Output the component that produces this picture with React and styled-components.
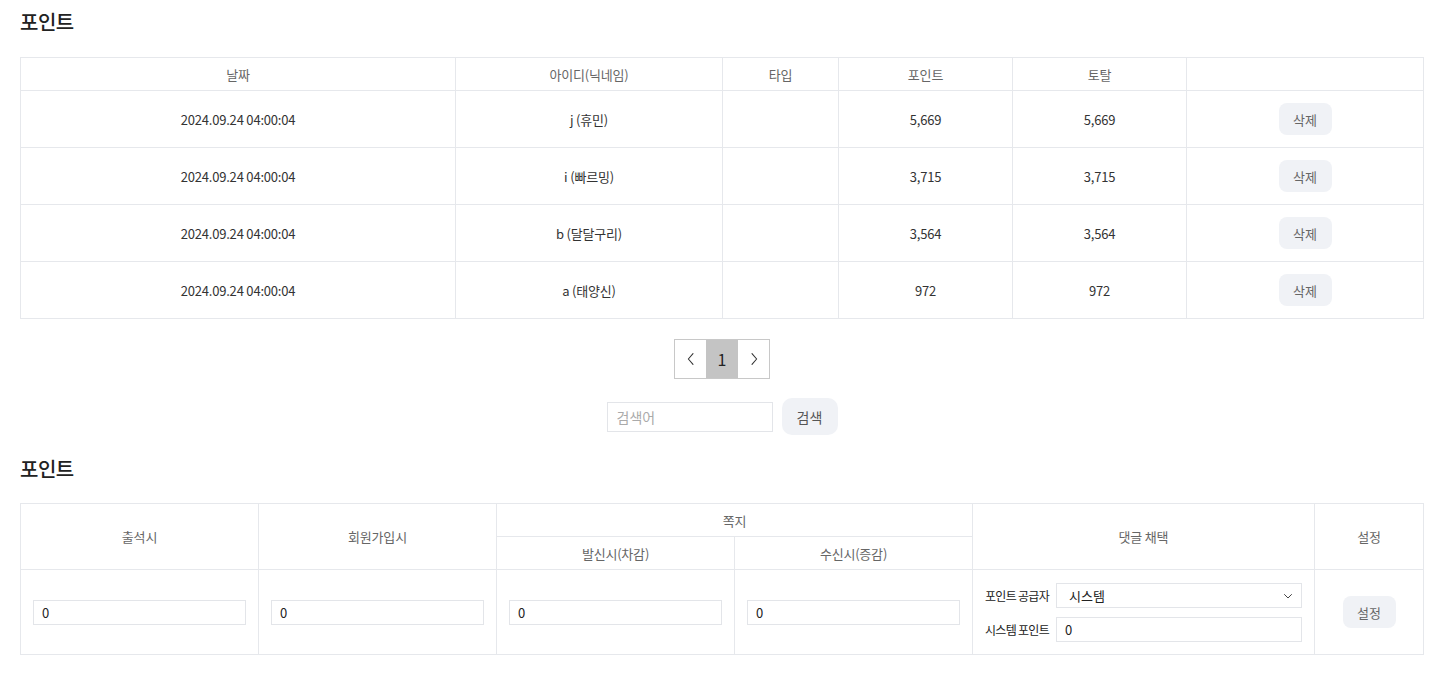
import React, { useState } from 'react'
import styled, { createGlobalStyle } from 'styled-components'

const GlobalStyle = createGlobalStyle`
  * { box-sizing: border-box; }
  body {
    margin: 0;
    background: #fff;
    font-family: "Noto Sans CJK KR", "Noto Sans", sans-serif;
    color: #333;
  }
`

const rows = [
  { date: '2024.09.24 04:00:04', id: 'j (휴민)', type: '', point: '5,669', total: '5,669' },
  { date: '2024.09.24 04:00:04', id: 'i (빠르밍)', type: '', point: '3,715', total: '3,715' },
  { date: '2024.09.24 04:00:04', id: 'b (달달구리)', type: '', point: '3,564', total: '3,564' },
  { date: '2024.09.24 04:00:04', id: 'a (태양신)', type: '', point: '972', total: '972' },
]

const App = () => {
  const [keyword, setKeyword] = useState('')
  const [settings, setSettings] = useState({
    attend: '0',
    join: '0',
    send: '0',
    receive: '0',
    system: '0',
  })

  const onChange = (e) => {
    setSettings({ ...settings, [e.target.name]: e.target.value })
  }

  return (
    <>
      <GlobalStyle />
      <Page>
        <Title>포인트</Title>
        <Table>
          <colgroup>
            <col style={{ width: 435 }} />
            <col style={{ width: 267 }} />
            <col style={{ width: 116 }} />
            <col style={{ width: 174 }} />
            <col style={{ width: 174 }} />
            <col />
          </colgroup>
          <thead>
            <tr>
              <Th $h={33}>날짜</Th>
              <Th $h={33}>아이디(닉네임)</Th>
              <Th $h={33}>타입</Th>
              <Th $h={33}>포인트</Th>
              <Th $h={33}>토탈</Th>
              <Th $h={33}></Th>
            </tr>
          </thead>
          <tbody>
            {rows.map((r, i) => (
              <tr key={i}>
                <Td $h={57}>{r.date}</Td>
                <Td $h={57}>{r.id}</Td>
                <Td $h={57}>{r.type}</Td>
                <Td $h={57}>{r.point}</Td>
                <Td $h={57}>{r.total}</Td>
                <Td $h={57}>
                  <GrayButton>삭제</GrayButton>
                </Td>
              </tr>
            ))}
          </tbody>
        </Table>

        <Pagination>
          <PageBtn aria-label="prev">
            <svg width="16" height="16" viewBox="0 0 24 24" fill="none" stroke="#333" strokeWidth="1.6" strokeLinecap="round" strokeLinejoin="round">
              <polyline points="15 4 8 12 15 20" />
            </svg>
          </PageBtn>
          <PageBtn $active>1</PageBtn>
          <PageBtn aria-label="next">
            <svg width="16" height="16" viewBox="0 0 24 24" fill="none" stroke="#333" strokeWidth="1.6" strokeLinecap="round" strokeLinejoin="round">
              <polyline points="9 4 16 12 9 20" />
            </svg>
          </PageBtn>
        </Pagination>

        <SearchRow>
          <SearchInput
            placeholder="검색어"
            value={keyword}
            onChange={(e) => setKeyword(e.target.value)}
          />
          <SearchButton>검색</SearchButton>
        </SearchRow>

        <Title $second>포인트</Title>
        <Table>
          <colgroup>
            <col style={{ width: 238 }} />
            <col style={{ width: 238 }} />
            <col style={{ width: 238 }} />
            <col style={{ width: 238 }} />
            <col style={{ width: 342 }} />
            <col />
          </colgroup>
          <thead>
            <tr>
              <Th rowSpan={2}>출석시</Th>
              <Th rowSpan={2}>회원가입시</Th>
              <Th colSpan={2} $h={33}>쪽지</Th>
              <Th rowSpan={2}>댓글 채택</Th>
              <Th rowSpan={2}>설정</Th>
            </tr>
            <tr>
              <Th $h={33}>발신시(차감)</Th>
              <Th $h={33}>수신시(증감)</Th>
            </tr>
          </thead>
          <tbody>
            <tr>
              <InputCell $h={85}>
                <Field name="attend" value={settings.attend} onChange={onChange} />
              </InputCell>
              <InputCell $h={85}>
                <Field name="join" value={settings.join} onChange={onChange} />
              </InputCell>
              <InputCell $h={85}>
                <Field name="send" value={settings.send} onChange={onChange} />
              </InputCell>
              <InputCell $h={85}>
                <Field name="receive" value={settings.receive} onChange={onChange} />
              </InputCell>
              <InputCell $h={85}>
                <FormGrid>
                  <Label>포인트 공급자</Label>
                  <SelectBox>
                    <Select defaultValue="system">
                      <option value="system">시스템</option>
                    </Select>
                    <svg width="12" height="12" viewBox="0 0 24 24" fill="none" stroke="#444" strokeWidth="2" strokeLinecap="round" strokeLinejoin="round">
                      <polyline points="5 9 12 16 19 9" />
                    </svg>
                  </SelectBox>
                  <Label>시스템 포인트</Label>
                  <Field name="system" value={settings.system} onChange={onChange} />
                </FormGrid>
              </InputCell>
              <Td $h={85}>
                <GrayButton>설정</GrayButton>
              </Td>
            </tr>
          </tbody>
        </Table>
      </Page>
    </>
  )
}

export default App

const Page = styled.div`
  padding: 0 28px 30px 20px;
  width: 1452px;
`

const Title = styled.h2`
  margin: 0;
  padding-top: ${(p) => (p.$second ? '20px' : '8px')};
  height: ${(p) => (p.$second ? '68px' : '57px')};
  font-size: 20px;
  font-weight: 500;
  letter-spacing: -0.5px;
  color: #222;
  line-height: 28px;
`

const Table = styled.table`
  width: 1404px;
  border-collapse: collapse;
  table-layout: fixed;
  border: 1px solid #e6e8ec;
`

const Th = styled.th`
  height: ${(p) => (p.$h ? `${p.$h}px` : 'auto')};
  border: 1px solid #e6e8ec;
  font-size: 13px;
  font-weight: 400;
  letter-spacing: -0.2px;
  color: #666;
  text-align: center;
  vertical-align: middle;
  padding: 0;
`

const Td = styled.td`
  height: ${(p) => `${p.$h}px`};
  border: 1px solid #e6e8ec;
  font-size: 13px;
  letter-spacing: -0.2px;
  color: #333;
  text-align: center;
  vertical-align: middle;
  padding: 0;
`

const InputCell = styled(Td)`
  padding: 0 12px;
  text-align: left;
`

const GrayButton = styled.button`
  border: none;
  background: #f0f2f6;
  color: #666;
  font-family: inherit;
  font-size: 13px;
  width: 53px;
  height: 32px;
  border-radius: 8px;
  cursor: pointer;
`

const Pagination = styled.div`
  display: flex;
  justify-content: center;
  margin: 20px 0 0;
`

const PageBtn = styled.button`
  width: 32px;
  height: 40px;
  border: 1px solid #c8c8c8;
  border-left: ${(p) => (p.$active ? 'none' : '1px solid #c8c8c8')};
  border-right: ${(p) => (p.$active ? 'none' : '1px solid #c8c8c8')};
  background: ${(p) => (p.$active ? '#c4c4c4' : '#fff')};
  color: #222;
  font-family: inherit;
  font-size: 16px;
  display: flex;
  align-items: center;
  justify-content: center;
  padding: 0;
  &:first-child {
    border-right: none;
  }
  &:last-child {
    border-left: none;
  }
`

const SearchRow = styled.div`
  display: flex;
  justify-content: center;
  align-items: center;
  gap: 9px;
  margin-top: 19px;
`

const SearchInput = styled.input`
  width: 166px;
  height: 30px;
  border: 1px solid #e3e5e9;
  padding: 0 9px;
  font-family: inherit;
  font-size: 14px;
  color: #333;
  outline: none;
  &::placeholder {
    color: #aaa;
  }
`

const SearchButton = styled.button`
  width: 56px;
  height: 37px;
  border: none;
  border-radius: 10px;
  background: #f0f2f6;
  color: #555;
  font-family: inherit;
  font-size: 14px;
`

const Field = styled.input`
  width: 100%;
  height: 25px;
  border: 1px solid #e3e5e9;
  padding: 0 8px;
  font-family: inherit;
  font-size: 13px;
  color: #222;
  outline: none;
`

const FormGrid = styled.div`
  display: grid;
  grid-template-columns: auto 1fr;
  column-gap: 7px;
  row-gap: 9px;
  align-items: center;
  padding-top: 1px;
`

const Label = styled.span`
  font-size: 12px;
  letter-spacing: -0.7px;
  color: #222;
  white-space: nowrap;
`

const SelectBox = styled.div`
  position: relative;
  height: 25px;
  svg {
    position: absolute;
    right: 8px;
    top: 7px;
    pointer-events: none;
  }
`

const Select = styled.select`
  appearance: none;
  width: 100%;
  height: 25px;
  border: 1px solid #e3e5e9;
  background: #fff;
  padding: 0 12px;
  font-family: inherit;
  font-size: 13px;
  color: #222;
  outline: none;
`
